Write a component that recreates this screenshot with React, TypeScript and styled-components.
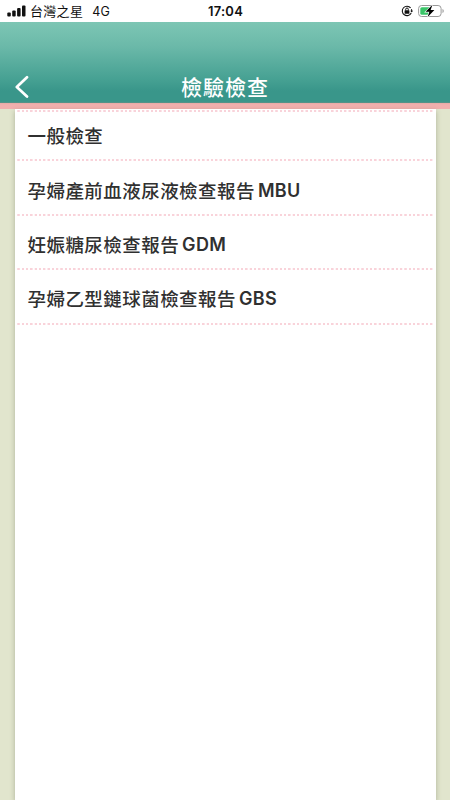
import React from "react";
import styled, { createGlobalStyle } from "styled-components";

const Global = createGlobalStyle`
  * { box-sizing: border-box; }
  body { margin: 0; background: #e1e5cd; font-family: Inter, "Noto Sans CJK TC", sans-serif; }
`;

const Screen = styled.main`
  display: flex;
  flex-direction: column;
  width: 450px;
  height: 800px;
  overflow: hidden;
`;

const StatusBar = styled.div`
  display: grid;
  grid-template-columns: 1fr auto 1fr;
  align-items: center;
  flex: none;
  height: 22px;
  padding: 0 6px 0 7px;
  background: #fff;
  color: #111;
  font-size: 13px;
  line-height: 20px;
`;

const StatusGroup = styled.div<{ $end?: boolean }>`
  display: flex;
  align-items: center;
  justify-content: ${(p) => (p.$end ? "flex-end" : "flex-start")};
  gap: ${(p) => (p.$end ? "5px" : "4px")};
  height: 22px;
  white-space: nowrap;
`;

const Carrier = styled.span`
  font-size: 13px;
  letter-spacing: 0.3px;
`;

const Network = styled.span`
  margin-left: 5px;
  padding-top: 2px;
  font-size: 12.5px;
  letter-spacing: 0.2px;
`;

const Clock = styled.time`
  font-size: 13px;
  font-weight: 600;
  letter-spacing: 0.25px;
`;

const Header = styled.header`
  display: grid;
  grid-template-columns: 44px 1fr 44px;
  align-items: end;
  flex: none;
  height: 81px;
  background: linear-gradient(#7dc6b4 0%, #6bb9a9 30%, #45a092 72%, #39968a 85%, #39968a 98%, #5e9187 100%);
`;

const BackButton = styled.button`
  display: flex;
  width: 44px;
  height: 34px;
  padding: 0 0 0 14px;
  align-items: center;
  border: 0;
  background: none;
`;

const Title = styled.h1`
  margin: 0;
  color: #fff;
  font-size: 21px;
  font-weight: 500;
  line-height: 31px;
  letter-spacing: 1px;
  text-align: center;
`;

const Accent = styled.div`
  flex: none;
  height: 6px;
  background: linear-gradient(#e5a9a5, #f1b0ae 30%, #f1b0ae);
`;

const Sheet = styled.section`
  flex: 1;
  margin: 0 14px 0 15px;
  padding: 1px 2px 0 1px;
  background: #fff;
  box-shadow: 0 2px 5px rgba(80, 85, 60, 0.36);
`;

const List = styled.ul`
  margin: 0;
  padding: 0;
  list-style: none;
`;

const Divider = styled.li`
  height: 2px;
  background: repeating-linear-gradient(90deg, transparent 0 1.2px, #f9d3da 1.6px 3.4px, transparent 3.9px 4.3px);
`;

const Row = styled.li<{ $first?: boolean }>`
  display: flex;
  align-items: center;
  height: ${(p) => (p.$first ? "47.4px" : "52.4px")};
  padding: ${(p) => (p.$first ? "0 0 1px 11.5px" : "4px 0 0 11.5px")};
  color: #303030;
  font-size: 18.5px;
  font-weight: 500;
  letter-spacing: 0.45px;
  white-space: nowrap;
`;

const Code = styled.span`
  margin-left: 3px;
  padding-top: 1px;
  font-size: 18px;
  font-weight: 600;
  letter-spacing: 0.35px;
`;

const reports = [
  { name: "一般檢查" },
  { name: "孕婦產前血液尿液檢查報告", code: "MBU" },
  { name: "妊娠糖尿檢查報告", code: "GDM" },
  { name: "孕婦乙型鏈球菌檢查報告", code: "GBS" },
];

const Signal = () => (
  <svg width="19" height="12" viewBox="0 0 19 12" fill="#111">
    <rect x="0.3" y="7.5" width="3.5" height="4" rx="1" />
    <rect x="5.2" y="5.6" width="3.5" height="5.9" rx="1" />
    <rect x="10.1" y="3" width="3.5" height="8.5" rx="1" />
    <rect x="15" y="0.5" width="3.5" height="11" rx="1" />
  </svg>
);

const RotationLock = () => (
  <svg width="12" height="12" viewBox="0 0 12 12" fill="none" stroke="#111">
    <path d="M9.6 2.9A4.7 4.7 0 1 0 10.2 8" strokeWidth="1.1" />
    <path d="M10.4 4.3a4.8 4.8 0 0 1 .3 2" strokeWidth="1.1" />
    <path d="M9.2 5.7h2.8L10.7 7.6z" fill="#111" stroke="none" />
    <rect x="3.6" y="5.3" width="4.8" height="3.5" rx=".5" fill="#111" stroke="none" />
    <path d="M4.7 5.4V4.3a1.3 1.3 0 0 1 2.6 0v1.1" strokeWidth="1" />
  </svg>
);

const Battery = () => (
  <svg width="26" height="14" viewBox="0 0 26 14">
    <rect x="0.6" y="1.5" width="22.5" height="11" rx="3" fill="#fff" stroke="#999" />
    <path d="M24.5 5c1.6.5 1.6 3.5 0 4z" fill="#999" />
    <rect x="2.3" y="3.2" width="10" height="7.6" rx="1.5" fill="#39c568" />
    <path d="M14.5.8 7.6 7.8h3.8L9.5 13.3l6.9-7.2h-3.8z" fill="#000" stroke="#fff" strokeWidth="1.2" paintOrder="stroke" />
  </svg>
);

export default function App() {
  return (
    <Screen>
      <Global />
      <StatusBar>
        <StatusGroup>
          <Signal />
          <Carrier>台灣之星</Carrier>
          <Network>4G</Network>
        </StatusGroup>
        <Clock>17:04</Clock>
        <StatusGroup $end>
          <RotationLock />
          <Battery />
        </StatusGroup>
      </StatusBar>
      <Header>
        <BackButton aria-label="返回">
          <svg width="16" height="24" viewBox="0 0 16 24" fill="none" stroke="#fff" strokeWidth="2.7" strokeLinecap="round" strokeLinejoin="round">
            <path d="M13 3.2 2.8 13 13 22.5" />
          </svg>
        </BackButton>
        <Title>檢驗檢查</Title>
      </Header>
      <Accent />
      <Sheet>
        <List>
          <Divider role="presentation" />
          {reports.map((r, i) => (
            <React.Fragment key={r.name}>
              <Row $first={i === 0}>
                {r.name}
                {r.code && <Code>{r.code}</Code>}
              </Row>
              <Divider role="presentation" />
            </React.Fragment>
          ))}
        </List>
      </Sheet>
    </Screen>
  );
}
